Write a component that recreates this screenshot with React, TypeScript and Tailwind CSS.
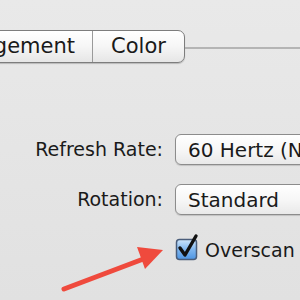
import React from 'react';

const font = { fontFamily: '"DejaVu Sans", "Liberation Sans", sans-serif' };

// Aqua style popup button, runs off the right edge like in the shot
const PopUp: React.FC<{ value: string }> = ({ value }) => (
  <div className="h-[31px] w-[200px] shrink-0 rounded-[6px] border border-[#8c8c8c] bg-gradient-to-b from-white via-[#f7f7f7] to-[#e9e9e9] shadow-[0_1px_1px_rgba(0,0,0,0.15)] flex items-center pl-[12px] text-[20px] text-[#1a1a1a]">
    {value}
  </div>
);

const CheckMark: React.FC = () => (
  <svg width="24" height="28" viewBox="0 0 24 28" className="block">
    <defs>
      <linearGradient id="cb" x1="0" y1="0" x2="0" y2="1">
        <stop offset="0" stopColor="#cfe6fb" />
        <stop offset="0.5" stopColor="#7fb6ef" />
        <stop offset="1" stopColor="#4d95e3" />
      </linearGradient>
    </defs>
    <rect x="1.5" y="6.5" width="20" height="20" rx="3" fill="url(#cb)" stroke="#4a5d7a" strokeWidth="1.5" />
    <path d="M5 15 L10 22 L21 3" fill="none" stroke="#111" strokeWidth="3.4" strokeLinecap="round" strokeLinejoin="round" />
  </svg>
);

export default function App() {
  return (
    <div className="relative w-[300px] h-[300px] overflow-hidden bg-gradient-to-b from-[#e9e9e9] to-[#e1e1e1] text-[#1a1a1a]" style={font}>
      {/* tab strip */}
      <div className="flex items-center pt-[30px]">
        <div className="flex h-[33px] ml-[-60px] rounded-[7px] border border-[#7d7d7d] bg-gradient-to-b from-white via-[#f6f6f6] to-[#e6e6e6] shadow-[0_1px_1px_rgba(0,0,0,0.2)] overflow-hidden">
          <div className="w-[152px] flex items-center justify-end pr-[17px] text-[21px] border-r border-[#9a9a9a]">Arrangement</div>
          <div className="w-[91px] flex items-center justify-center text-[21px]">Color</div>
        </div>
        <div className="flex-1 h-[2px] mt-[3px] bg-[#b4b4b4]" />
      </div>

      {/* form rows */}
      <div className="mt-[71px] flex flex-col gap-[19px]">
        <div className="flex items-center gap-[12px]">
          <div className="w-[163px] shrink-0 text-right text-[19px]">Refresh Rate:</div>
          <PopUp value="60 Hertz (NTSC)" />
        </div>
        <div className="flex items-center gap-[12px]">
          <div className="w-[163px] shrink-0 text-right text-[19px]">Rotation:</div>
          <PopUp value="Standard" />
        </div>
        <div className="flex items-center gap-[6px] pl-[175px] mt-[-4px]">
          <CheckMark />
          <span className="text-[19px] mt-[6px]">Overscan</span>
        </div>
      </div>

      {/* red annotation arrow */}
      <svg className="absolute left-0 top-0 pointer-events-none" width="300" height="300">
        <line x1="64" y1="289" x2="146" y2="258" stroke="#ef4a3d" strokeWidth="5" strokeLinecap="round" />
        <polygon points="163,250 137,247 145,269" fill="#ef4a3d" />
      </svg>
    </div>
  );
}
